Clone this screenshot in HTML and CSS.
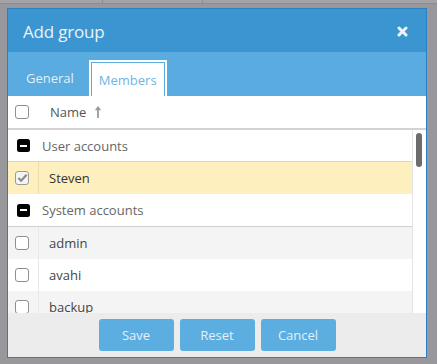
FILE: index.html
```html
<!DOCTYPE html>
<html>
<head>
<meta charset="utf-8">
<link rel="stylesheet" href="styles.css">
</head>
<body>
<div class="topbar"><div class="tcell c1"></div><div class="tcell c2"></div><div class="tcell c3"></div></div>
<div class="dialog">
  <div class="header">
    <div class="title">Add group</div>
    <svg class="close" width="11" height="11" viewBox="0 0 11 11"><path d="M2 2 L9 9 M9 2 L2 9" stroke="#eef4fa" stroke-width="3" stroke-linecap="round"/></svg>
  </div>
  <div class="tabs">
    <div class="tab">General</div>
    <div class="tab active"><span class="tab-inner">Members</span></div>
  </div>
  <div class="grid-head">
    <div class="cbcol"><span class="cb"></span></div>
    <div class="namecol">Name
      <svg class="sort" width="8" height="14" viewBox="0 0 8 14"><path d="M4 2 L4 13" stroke="#9a9a9a" stroke-width="1.8"/><path d="M0.8 5.2 L4 1 L7.2 5.2 Z" fill="#9a9a9a"/></svg>
    </div>
  </div>
  <div class="body">
    <div class="list">
      <div class="group"><span class="minus"></span>User accounts</div>
      <div class="row sel"><div class="cbcol"><span class="cb checked"><svg width="12" height="10" viewBox="0 0 12 10"><path d="M1.5 5 L4.5 8 L10.5 1.5" stroke="#8a8a8a" stroke-width="2.4" fill="none"/></svg></span></div><div class="cell">Steven</div></div>
      <div class="group g2"><span class="minus"></span>System accounts</div>
      <div class="row alt"><div class="cbcol"><span class="cb"></span></div><div class="cell">admin</div></div>
      <div class="row"><div class="cbcol"><span class="cb"></span></div><div class="cell">avahi</div></div>
      <div class="row alt"><div class="cbcol"><span class="cb"></span></div><div class="cell">backup</div></div>
    </div>
    <div class="track"><div class="thumb"></div></div>
  </div>
  <div class="footer">
    <button class="btn">Save</button>
    <button class="btn">Reset</button>
    <button class="btn">Cancel</button>
  </div>
</div>
</body>
</html>
```
FILE: styles.css
```css
html, body { margin: 0; padding: 0; }
body {
  background: #98989c;
  width: 437px;
  height: 364px;
  overflow: hidden;
  font-family: "Open Sans", "DejaVu Sans", sans-serif;
}
.topbar {
  height: 3px;
  background: #a3a3a7;
  border-bottom: 1px solid #8c8c90;
  display: flex;
}
.tcell { border-right: 1px solid #8c8c90; }
.c1 { width: 102px; }
.c2 { width: 99px; }
.c3 { flex: 1; border-right: none; }
.dialog {
  margin: 4px 0 0 7px;
  width: 420px;
  height: 350px;
  box-sizing: border-box;
  border: 1px solid #2b7fc2;
  display: flex;
  flex-direction: column;
  background: #fff;
}
.header {
  height: 43px;
  background: #3b95d1;
  display: flex;
  align-items: center;
  justify-content: space-between;
  padding: 0 18px 0 15px;
  flex-shrink: 0;
}
.title {
  color: #eaf2fa;
  font-size: 17px;
  letter-spacing: -0.2px;
  margin-top: 1px;
}
.close { margin-top: 1px; }
.tabs {
  height: 44px;
  box-sizing: border-box;
  background: #5aabdf;
  padding: 8px 0 0 8px;
  display: flex;
  gap: 5px;
  flex-shrink: 0;
}
.tab {
  height: 36px;
  line-height: 36px;
  padding: 0 10px;
  color: #e3eff9;
  font-size: 13px;
}
.tab.active {
  background: #fff;
  padding: 2px 2px 0;
  box-sizing: border-box;
  line-height: normal;
  display: flex;
}
.tab-inner {
  border: 1px solid #5aabdf;
  border-bottom: none;
  padding: 0 7px;
  color: #6cb5e6;
  display: flex;
  align-items: center;
  padding-top: 1px;
}
.grid-head {
  height: 32px;
  border-bottom: 2px solid #d3d3d3;
  display: flex;
  align-items: center;
  flex-shrink: 0;
}
.cbcol {
  width: 31px;
  flex-shrink: 0;
  display: flex;
  align-items: center;
  padding-left: 7px;
  box-sizing: border-box;
  height: 100%;
}
.cb {
  width: 14px;
  height: 14px;
  box-sizing: border-box;
  border: 1.5px solid #8f8f8f;
  border-radius: 3px;
  background: #fff;
  display: flex;
  align-items: center;
  justify-content: center;
}
.cb.checked { background: #f4f4f4; border-color: #9a9a9a; }
.cb.checked svg { margin-top: -1px; margin-left: 1px; }
.namecol {
  padding-left: 11px;
  font-size: 13px;
  color: #555;
  display: flex;
  align-items: center;
  gap: 8px;
}
.body {
  height: 183px;
  display: flex;
  overflow: hidden;
  flex-shrink: 0;
}
.list {
  width: 405px;
  flex-shrink: 0;
  border-right: 1px solid #e4e4e4;
  box-sizing: border-box;
}
.track {
  flex: 1;
  position: relative;
  background: #fff;
}
.thumb {
  position: absolute;
  left: 3px;
  top: 3px;
  width: 6px;
  height: 34px;
  border-radius: 3px;
  background: #6c6c6c;
}
.group {
  height: 31px;
  display: flex;
  align-items: center;
  padding-left: 9px;
  font-size: 13px;
  color: #666;
  background: #fff;
}
.group.g2 { height: 32px; border-bottom: 1px solid #d0d0d0; }
.minus {
  width: 13px;
  height: 13px;
  background: #000;
  border-radius: 2.5px;
  margin-right: 12px;
  position: relative;
}
.minus::after {
  content: "";
  position: absolute;
  left: 3px;
  top: 5.5px;
  width: 7px;
  height: 2px;
  background: #fff;
}
.row {
  height: 32px;
  display: flex;
  align-items: center;
  background: #fff;
  font-size: 13px;
  color: #444;
}
.row.alt { background: #f4f4f4; }
.row.sel {
  background: #feefbe;
  border-top: 1px solid #d6d6d6;
  color: #333;
}
.row .cbcol { border-right: 1px solid #e8e8e8; }
.row.sel .cbcol { border-right-color: #efdca4; }
.cell { padding-left: 10px; }
.footer {
  flex: 1;
  background: #ececec;
  display: flex;
  justify-content: center;
  gap: 6px;
  padding-top: 6px;
  box-sizing: border-box;
}
.btn {
  width: 75px;
  height: 32px;
  border: none;
  border-radius: 3px;
  background: #5caee0;
  color: #e4eff8;
  font-family: "Open Sans", "DejaVu Sans", sans-serif;
  font-size: 13px;
  padding: 0;
}
```
